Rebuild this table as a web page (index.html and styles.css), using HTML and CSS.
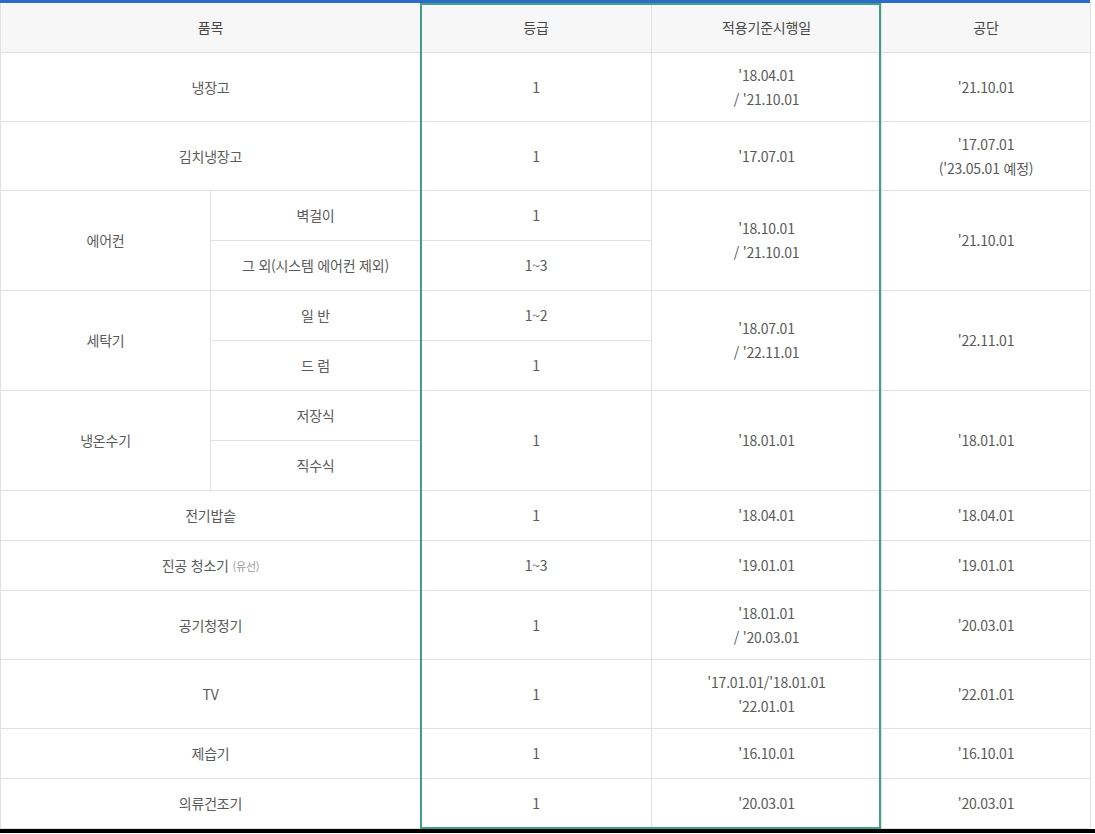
FILE: index.html
```html
<!DOCTYPE html>
<html lang="ko">
<head>
<meta charset="utf-8">
<link rel="stylesheet" href="styles.css">
</head>
<body>
<div class="wrap">
  <table class="tbl">
    <colgroup>
      <col class="c1"><col class="c2"><col class="c3"><col class="c4"><col class="c5">
    </colgroup>
    <thead>
      <tr class="h"><th colspan="2">품목</th><th>등급</th><th>적용기준시행일</th><th>공단</th></tr>
    </thead>
    <tbody>
      <tr class="r2"><td colspan="2">냉장고</td><td>1</td><td>'18.04.01<br>/ '21.10.01</td><td>'21.10.01</td></tr>
      <tr class="r2"><td colspan="2">김치냉장고</td><td>1</td><td>'17.07.01</td><td>'17.07.01<br>('23.05.01 예정)</td></tr>
      <tr class="r1"><td rowspan="2">에어컨</td><td>벽걸이</td><td>1</td><td rowspan="2">'18.10.01<br>/ '21.10.01</td><td rowspan="2">'21.10.01</td></tr>
      <tr class="r1"><td>그 외(시스템 에어컨 제외)</td><td>1~3</td></tr>
      <tr class="r1"><td rowspan="2">세탁기</td><td>일 반</td><td>1~2</td><td rowspan="2">'18.07.01<br>/ '22.11.01</td><td rowspan="2">'22.11.01</td></tr>
      <tr class="r1"><td>드 럼</td><td>1</td></tr>
      <tr class="r1"><td rowspan="2">냉온수기</td><td>저장식</td><td rowspan="2">1</td><td rowspan="2">'18.01.01</td><td rowspan="2">'18.01.01</td></tr>
      <tr class="r1"><td>직수식</td></tr>
      <tr class="r1"><td colspan="2">전기밥솥</td><td>1</td><td>'18.04.01</td><td>'18.04.01</td></tr>
      <tr class="r1"><td colspan="2">진공 청소기 <span class="small">(유선)</span></td><td>1~3</td><td>'19.01.01</td><td>'19.01.01</td></tr>
      <tr class="r2"><td colspan="2">공기청정기</td><td>1</td><td>'18.01.01<br>/ '20.03.01</td><td>'20.03.01</td></tr>
      <tr class="r2"><td colspan="2">TV</td><td>1</td><td>'17.01.01/'18.01.01<br>'22.01.01</td><td>'22.01.01</td></tr>
      <tr class="r1"><td colspan="2">제습기</td><td>1</td><td>'16.10.01</td><td>'16.10.01</td></tr>
      <tr class="r1"><td colspan="2">의류건조기</td><td>1</td><td>'20.03.01</td><td>'20.03.01</td></tr>
    </tbody>
  </table>
  <div class="highlight"></div>
</div>
<div class="bottom-bar"></div>
</body>
</html>
```
FILE: styles.css
```css
html, body {
  margin: 0;
  padding: 0;
  background: #fff;
}
body {
  width: 1095px;
  height: 834px;
  overflow: hidden;
  font-family: "Noto Sans CJK KR", "Noto Sans", sans-serif;
  color: #5a5a5a;
}
.wrap {
  position: relative;
  width: 1090px;
  border-top: 3px solid #2b6cc4;
}
.tbl {
  width: 1090px;
  border-collapse: collapse;
  table-layout: fixed;
  font-size: 14px;
  letter-spacing: -0.2px;
  line-height: 24px;
}
.c1 { width: 210px; }
.c2 { width: 210px; }
.c3 { width: 231px; }
.c4 { width: 230px; }
.c5 { width: 209px; }
.tbl th, .tbl td {
  border: 1px solid #e1e1e1;
  text-align: center;
  vertical-align: middle;
  padding: 0;
  font-weight: normal;
}
.tbl th {
  background: #f7f7f7;
  color: #484848;
  border-top: none;
}
.tbl tr.h { height: 49px; }
.tbl tr.r1 { height: 50px; }
.tbl tr.r2 { height: 69px; }
.small {
  font-size: 11px;
  color: #999;
}
.highlight {
  position: absolute;
  left: 420px;
  top: 0;
  width: 457px;
  height: 822px;
  border: 2px solid #3fa08e;
  pointer-events: none;
}
.bottom-bar {
  height: 4px;
  background: #000;
  width: 1095px;
}
```
